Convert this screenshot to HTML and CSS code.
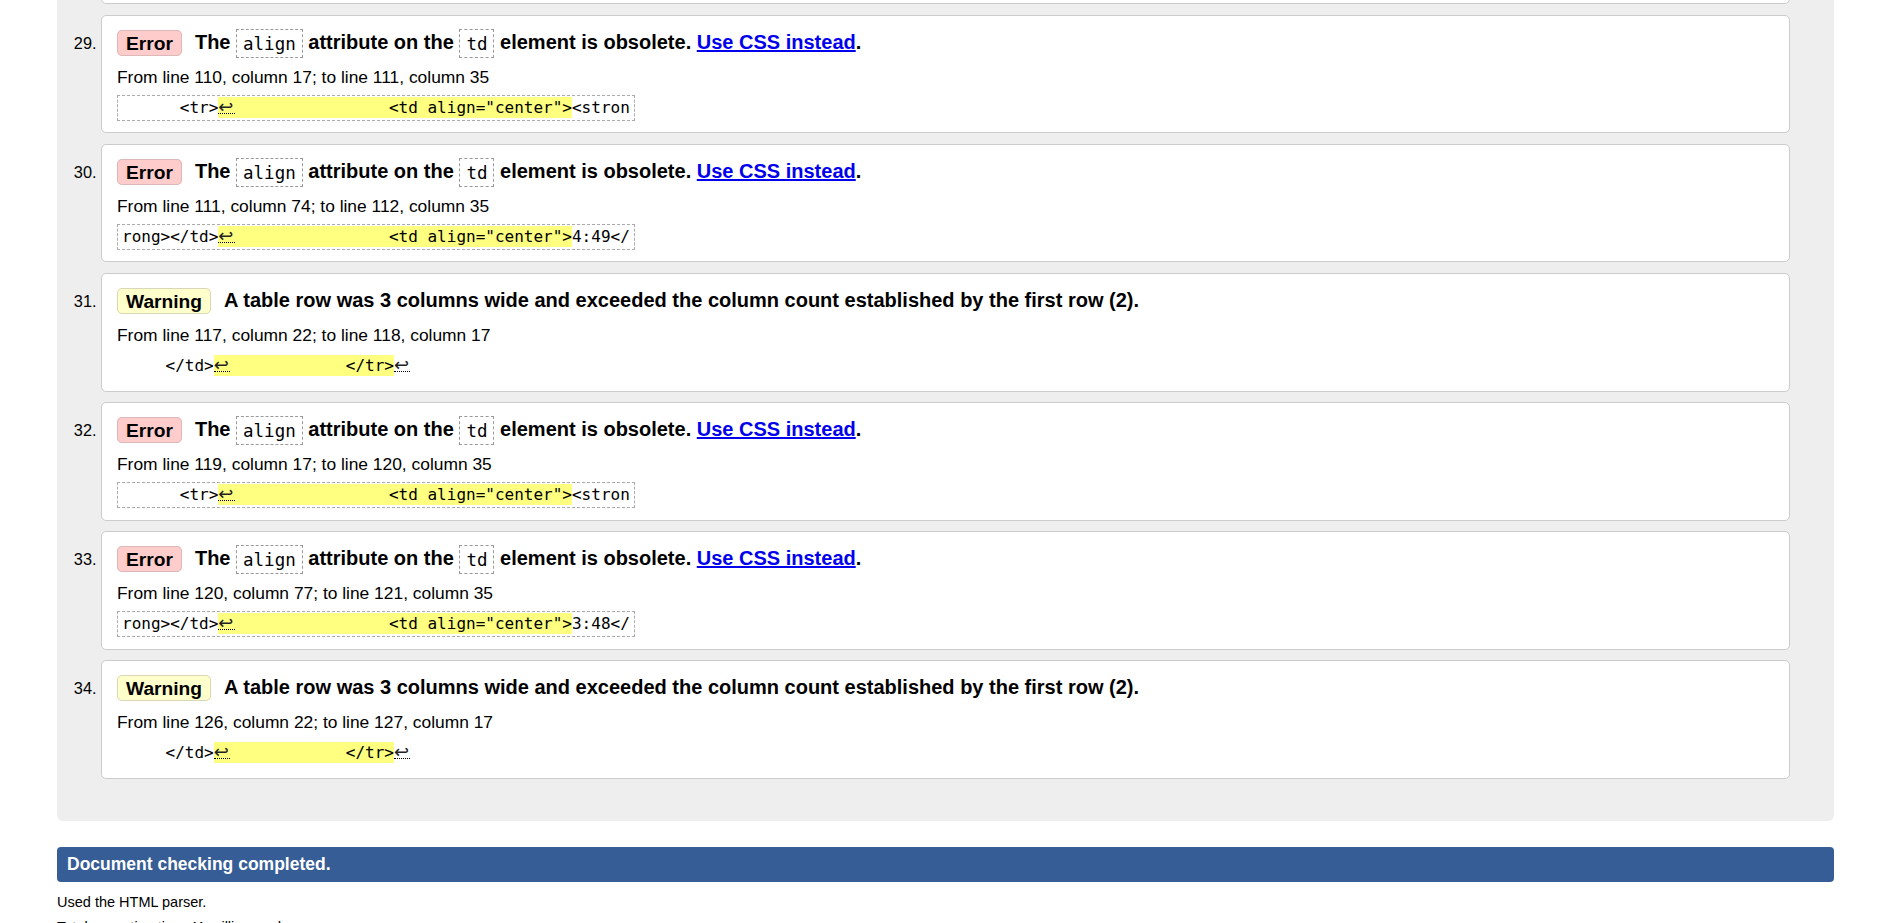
FILE: index.html
```html
<!DOCTYPE html>
<html lang="en">
<head>
<meta charset="utf-8">
<title>Nu Html Checker results</title>
<link rel="stylesheet" href="styles.css">
</head>
<body>
<div class="page">
  <div class="results">
    <ol start="28">
      <li class="card">
        <p class="msg"><strong class="badge warn">Warning</strong>A table row was 3 columns wide and exceeded the column count established by the first row (2).</p>
        <p class="loc">From line 108, column 22; to line 109, column 17</p>
        <p class="extract plain">    &lt;/td&gt;<mark><span class="lf">↩</span>            &lt;/tr&gt;</mark><span class="lf">↩</span></p>
      </li>
      <li class="card">
        <p class="msg"><strong class="badge err">Error</strong>The <code>align</code> attribute on the <code>td</code> element is obsolete. <a href="#">Use CSS instead</a>.</p>
        <p class="loc">From line 110, column 17; to line 111, column 35</p>
        <p class="extract">      &lt;tr&gt;<mark><span class="lf">↩</span>                &lt;td align="center"&gt;</mark>&lt;stron</p>
      </li>
      <li class="card">
        <p class="msg"><strong class="badge err">Error</strong>The <code>align</code> attribute on the <code>td</code> element is obsolete. <a href="#">Use CSS instead</a>.</p>
        <p class="loc">From line 111, column 74; to line 112, column 35</p>
        <p class="extract">rong&gt;&lt;/td&gt;<mark><span class="lf">↩</span>                &lt;td align="center"&gt;</mark>4:49&lt;/</p>
      </li>
      <li class="card">
        <p class="msg"><strong class="badge warn">Warning</strong>A table row was 3 columns wide and exceeded the column count established by the first row (2).</p>
        <p class="loc">From line 117, column 22; to line 118, column 17</p>
        <p class="extract plain">    &lt;/td&gt;<mark><span class="lf">↩</span>            &lt;/tr&gt;</mark><span class="lf">↩</span></p>
      </li>
      <li class="card">
        <p class="msg"><strong class="badge err">Error</strong>The <code>align</code> attribute on the <code>td</code> element is obsolete. <a href="#">Use CSS instead</a>.</p>
        <p class="loc">From line 119, column 17; to line 120, column 35</p>
        <p class="extract">      &lt;tr&gt;<mark><span class="lf">↩</span>                &lt;td align="center"&gt;</mark>&lt;stron</p>
      </li>
      <li class="card">
        <p class="msg"><strong class="badge err">Error</strong>The <code>align</code> attribute on the <code>td</code> element is obsolete. <a href="#">Use CSS instead</a>.</p>
        <p class="loc">From line 120, column 77; to line 121, column 35</p>
        <p class="extract">rong&gt;&lt;/td&gt;<mark><span class="lf">↩</span>                &lt;td align="center"&gt;</mark>3:48&lt;/</p>
      </li>
      <li class="card">
        <p class="msg"><strong class="badge warn">Warning</strong>A table row was 3 columns wide and exceeded the column count established by the first row (2).</p>
        <p class="loc">From line 126, column 22; to line 127, column 17</p>
        <p class="extract plain">    &lt;/td&gt;<mark><span class="lf">↩</span>            &lt;/tr&gt;</mark><span class="lf">↩</span></p>
      </li>
    </ol>
  </div>
  <h2 class="done">Document checking completed.</h2>
  <p class="note">Used the HTML parser.</p>
  <p class="note">Total execution time 41 milliseconds.</p>
</div>
</body>
</html>
```
FILE: styles.css
```css
* { box-sizing: border-box; }
html, body { margin: 0; padding: 0; }
body {
  font-family: "Liberation Sans", Arial, sans-serif;
  color: #000;
  background: #fff;
}
.page {
  margin: -115px 57px 0;
}
.results {
  background: #eee;
  border-radius: 0 0 6px 6px;
  padding: 1px 44px 42px;
}
.results ol {
  margin: 0;
  padding: 0;
  list-style: decimal outside;
}
.card {
  background: #fff;
  border: 1px solid #ccc;
  border-radius: 5px;
  padding: 10px 15px 11.7px;
  margin: 0 0 10.8px;
  font-size: 16px;
  line-height: 20px;
}
.card:last-child { margin-bottom: 0; }
.card::marker { font-size: 16.3px; }
.msg {
  margin: 0;
  font-weight: bold;
  font-size: 20px;
  line-height: 32px;
}
.badge {
  display: inline;
  font-weight: bold;
  font-size: 19.2px;
  line-height: 20px;
  border: 1px solid #ccc;
  border-radius: 5px;
  padding: 1.5px 8px;
  margin-right: 13px;
}
.badge.err { background: #fcc; border-color: #dcb8b8; }
.badge.warn { background: #ffc; border-color: #d8d8b8; }
.msg code {
  font-family: "DejaVu Sans Mono", "Liberation Mono", monospace;
  font-weight: normal;
  font-size: 17.5px;
  line-height: 20px;
  border: 1px dashed #999;
  padding: 3.5px 6px;
}
.msg a { color: #00e; text-decoration: underline; }
.loc {
  margin: 8.6px 0 0;
  font-size: 17.4px;
  line-height: 20px;
}
.extract {
  display: block;
  width: fit-content;
  height: 26px;
  margin: 8px 0 0;
  border: 1px dashed #aaa;
  padding: 2px 4px;
  font-family: "DejaVu Sans Mono", "Liberation Mono", monospace;
  font-size: 16px;
  line-height: 20px;
  white-space: pre;
}
.extract.plain { border-color: transparent; padding-left: 9px; }
.extract mark {
  background: #ffff80;
  color: inherit;
  padding: 1px 0;
}
.lf {
  display: inline-block;
  width: 16.5px;
  font-family: "DejaVu Sans", sans-serif;
  font-size: 18px;
  line-height: 13px;
  color: #222;
  border-bottom: 1px dotted #000;
  text-align: left;
}
.done {
  margin: 26.7px 0 0;
  background: #365d95;
  color: #fff;
  border-radius: 4px;
  font-size: 17.5px;
  font-weight: bold;
  line-height: 35px;
  padding: 0 10px;
}
.note {
  margin: 10.4px 0 0;
  font-size: 14.5px;
  line-height: 18px;
}
.note + .note { margin-top: 7px; }
```
